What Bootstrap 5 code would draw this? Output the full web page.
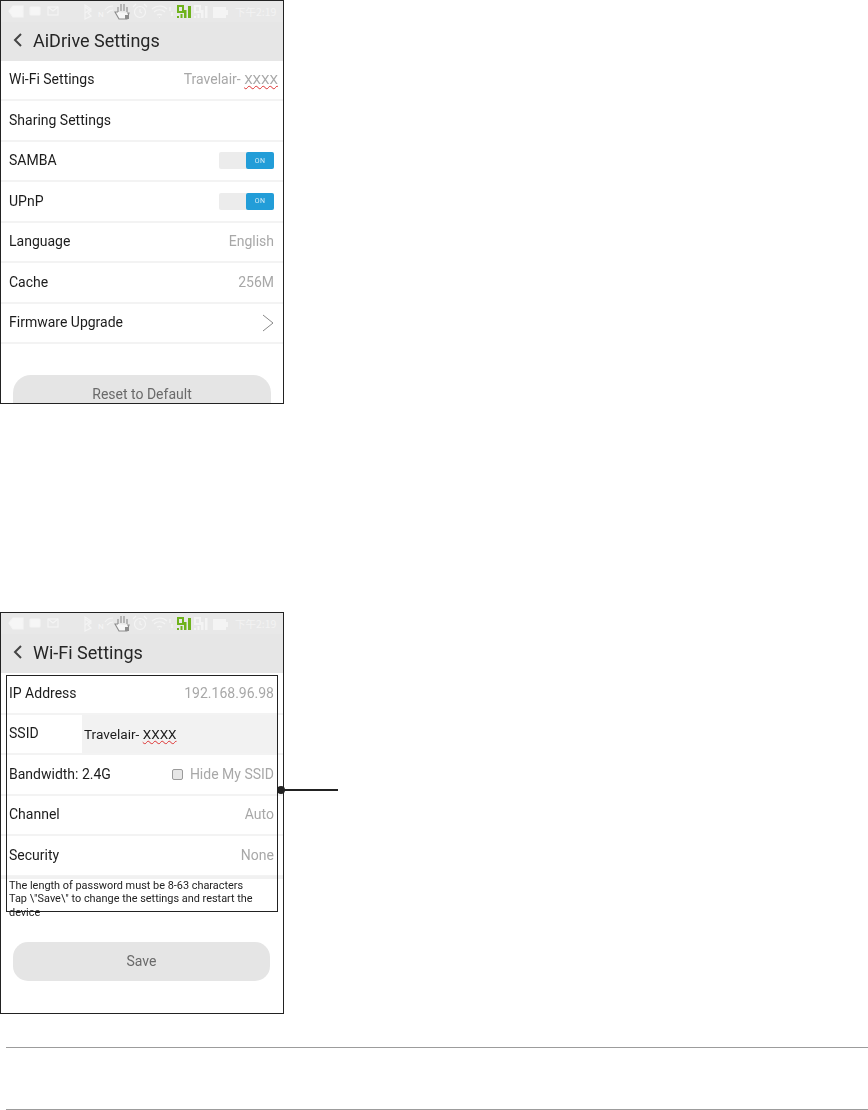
<!DOCTYPE html>
<html lang="en">
<head>
  <meta charset="UTF-8" />
  <meta name="viewport" content="width=device-width, initial-scale=1.0"/>
  <title>AiDrive Settings</title>
  <link href="https://cdn.jsdelivr.net/npm/bootstrap@5.3.3/dist/css/bootstrap.min.css" rel="stylesheet"/>
  <style>
    html, body { height: 1110px; overflow: hidden; }
    body { background: #fff; font-family: Roboto, "Liberation Sans", sans-serif; color: #1c1c1c; }

    .shot { width: 284px; border: 1px solid #222; background: #fff; overflow: hidden; position: relative; }
    .shot-one { height: 404px; }
    .shot-two { height: 402px; margin-top: 208px; overflow: visible; }
    .shot-inner { filter: blur(.4px); height: 100%; overflow: hidden; }

    .status-strip { height: 21px; background: #e8e8e8; }
    .status-strip svg { display: block; }
    .clock { font: 10.5px "Noto Sans CJK SC", Roboto, sans-serif; fill: #f3f3f3; }
    .title-bar { height: 38.5px; padding: 0 0 2px 12px; background: #e6e6e6; gap: 11px; font-size: 18px; color: #262626; }

    .set-row { height: 40.5px; padding: 0 9px 0 8px; border-bottom: 2px solid #f3f3f3; font-size: 14px; }
    .set-val { color: #a8a8a8; }
    .val-over { margin-right: -4px; }
    .squiggle { font-size: 13.5px; text-decoration: underline wavy #d33; text-decoration-thickness: 1px; text-underline-offset: 1px; }
    .toggle-track { width: 55px; height: 17px; background: #ececec; border-radius: 2px; }
    .toggle-on { width: 28px; background: #229dd8; color: #d5ecf8; font-size: 7px; letter-spacing: .3px; border-radius: 2px; }

    .wide-btn { height: 39px; background: #e5e5e5; color: #6a6a6a; border-radius: 15px; font-size: 14px; margin: 0 12px; }
    .btn-reset { margin-top: 31px; height: 58px; padding-top: 9px; border-radius: 18px; }

    .pad-top { height: 1.5px; }
    .row-ssid { padding-right: 6px; }
    .ssid-field { width: 196px; height: 38px; background: #f2f2f2; padding-left: 2px; margin-right: -1px; font-size: 13.6px; }
    .form-check-input.hide-box { width: 11px; height: 11px; margin: 0 7px 0 0; border: 1px solid #9a9a9a; border-radius: 2px; background-color: #e6e6e6; }
    .note { font-size: 10.9px; line-height: 13.5px; padding: 0 8px; border-top: 3px solid #f1f1f1; margin-top: -1px; color: #222; }
    .btn-save { margin: 23px 13px 0 12px; }

    .callout-box { position: absolute; left: 5px; top: 62px; width: 272px; height: 237px; border: 1px solid #222; }
    .callout-line { position: absolute; left: 280px; top: 176px; width: 57px; height: 2px; background: #222; }
    .callout-dot { position: absolute; left: 276px; top: 173px; width: 8px; height: 8px; background: #222; border-radius: 50%; }

    .foot-rule { height: 1px; background: #9c9c9c; margin-left: 6px; }
    .foot-one { margin-top: 33px; }
    .foot-two { margin-top: 61px; }
  </style>
</head>
<body>

  <!-- AiDrive settings -->
  <div class="shot shot-one">
    <div class="shot-inner">
      <div class="status-strip">
        <svg id="statusIcons" width="282" height="21" viewBox="0 0 282 21">
          <g fill="none" stroke="#f4f4f4" stroke-width="1.2">
            <path d="M8 10l4-5h10v11H12z" fill="#f6f6f6"/>
            <rect x="29" y="6" width="10" height="8" rx="1" fill="#f6f6f6"/>
            <rect x="47" y="6" width="10" height="8"/><path d="M47 6l5 4 5-4"/>
            <path d="M84 6l6 4-3 2 3 3-6 3V4l6 4-6 4"/>
            <path d="M104 9c2-3 5-4 8-4M106 12c2-2 3-3 6-3"/>
            <text x="97" y="16" font-size="8" fill="#f6f6f6" stroke="none" font-family="Roboto">N</text>
            <path d="M117 11V6M120 10V3M123 10V3M126 11V6M117 11l-3 0 4 7h8l2-6-2 0" fill="#f6f6f6" stroke="#8c8c8c" stroke-width="1.1"/>
            <path d="M124 14l4 0v4h-4z" fill="#8c8c8c" stroke="none"/>
            <circle cx="139" cy="11" r="5.5"/><path d="M132 6l3-3M146 6l-3-3M139 8v3l2 1"/>
            <path d="M151 8c5-4 11-4 15 0M153 11c3-3 8-3 11 0M156 14c2-1 3-1 5 0M158 16.500h1"/>
            <path d="M169 6v4M171 11v4" stroke-width="1.400"/>
          </g>
          <g fill="#6fb31c">
            <path d="M176 4h7v8h-7zM178 6v4h3V6z" fill-rule="evenodd"/>
            <rect x="176" y="15" width="2" height="2"/><rect x="179.500" y="13" width="2" height="4"/><rect x="183" y="9" width="2.500" height="8"/><rect x="187" y="5" width="3" height="12"/>
          </g>
          <g fill="#f4f4f4">
            <path d="M193 4h7v8h-7zM195 6v4h3V6z" fill-rule="evenodd"/>
            <rect x="193" y="15" width="2" height="2"/><rect x="196.500" y="13" width="2" height="4"/><rect x="200" y="9" width="2.500" height="8"/><rect x="204" y="5" width="2.500" height="12"/>
            <rect x="212" y="6" width="13" height="11"/><rect x="225" y="9" width="2" height="5"/>
          </g>
          <text x="234" y="15" class="clock">下午2:19</text>
        </svg>
      </div>
      <div class="title-bar d-flex align-items-center">
        <svg width="9" height="14" viewBox="0 0 9 14" fill="none" stroke="#444" stroke-width="2"><path d="M8 1L2 7l6 6"/></svg>
        <span>AiDrive Settings</span>
      </div>
      <div class="set-row d-flex align-items-center justify-content-between"><span>Wi-Fi Settings</span><span class="set-val val-over">Travelair- <span class="squiggle">XXXX</span></span></div>
      <div class="set-row d-flex align-items-center justify-content-between"><span>Sharing Settings</span></div>
      <div class="set-row d-flex align-items-center justify-content-between"><span>SAMBA</span><div class="toggle-track d-flex justify-content-end"><div class="toggle-on d-flex align-items-center justify-content-center">ON</div></div></div>
      <div class="set-row d-flex align-items-center justify-content-between"><span>UPnP</span><div class="toggle-track d-flex justify-content-end"><div class="toggle-on d-flex align-items-center justify-content-center">ON</div></div></div>
      <div class="set-row d-flex align-items-center justify-content-between"><span>Language</span><span class="set-val">English</span></div>
      <div class="set-row d-flex align-items-center justify-content-between"><span>Cache</span><span class="set-val">256M</span></div>
      <div class="set-row d-flex align-items-center justify-content-between"><span>Firmware Upgrade</span><svg width="12" height="18" viewBox="0 0 12 18" fill="none" stroke="#888" stroke-width="1"><path d="M1 1l10 8-10 8"/></svg></div>
      <div class="wide-btn btn-reset d-flex justify-content-center">Reset to Default</div>
    </div>
  </div>

  <!-- Wi-Fi settings -->
  <div class="shot shot-two">
    <div class="shot-inner">
      <div class="status-strip" id="statusCopy"></div>
      <div class="title-bar d-flex align-items-center">
        <svg width="9" height="14" viewBox="0 0 9 14" fill="none" stroke="#444" stroke-width="2"><path d="M8 1L2 7l6 6"/></svg>
        <span>Wi-Fi Settings</span>
      </div>
      <div class="pad-top"></div>
      <div class="set-row d-flex align-items-center justify-content-between"><span>IP Address</span><span class="set-val">192.168.96.98</span></div>
      <div class="set-row row-ssid d-flex align-items-center justify-content-between"><span>SSID</span><div class="ssid-field d-flex align-items-center"><span>Travelair- <span class="squiggle">XXXX</span></span></div></div>
      <div class="set-row d-flex align-items-center justify-content-between"><span>Bandwidth: 2.4G</span><span class="set-val d-flex align-items-center"><input class="form-check-input hide-box" type="checkbox" aria-label="Hide My SSID">Hide My SSID</span></div>
      <div class="set-row d-flex align-items-center justify-content-between"><span>Channel</span><span class="set-val">Auto</span></div>
      <div class="set-row d-flex align-items-center justify-content-between"><span>Security</span><span class="set-val">None</span></div>
      <div class="note">The length of password must be 8-63 characters<br>Tap \"Save\" to change the settings and restart the device</div>
      <div class="wide-btn btn-save d-flex align-items-center justify-content-center">Save</div>
    </div>
    <div class="callout-box"></div>
    <div class="callout-line"></div>
    <div class="callout-dot"></div>
  </div>

  <div class="foot-rule foot-one"></div>
  <div class="foot-rule foot-two"></div>

  <script src="https://cdn.jsdelivr.net/npm/bootstrap@5.3.3/dist/js/bootstrap.bundle.min.js"></script>
  <script>
    // both shots have the same status bar
    var statusCopy = document.getElementById("statusIcons").cloneNode(true);
    statusCopy.removeAttribute("id");
    document.getElementById("statusCopy").appendChild(statusCopy);
  </script>
</body>
</html>
